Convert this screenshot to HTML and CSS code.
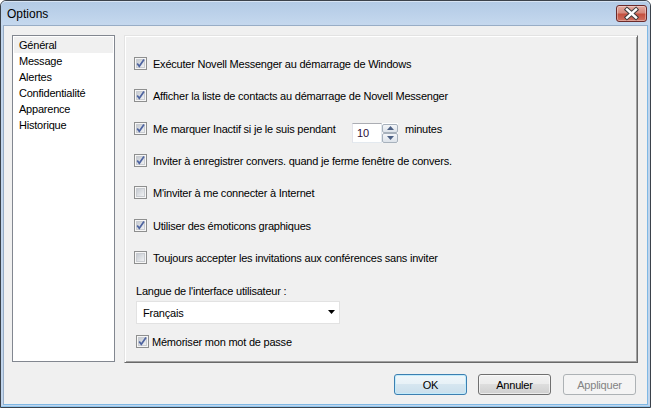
FILE: index.html
```html
<!DOCTYPE html>
<html lang="fr">
<head>
<meta charset="utf-8">
<title>Options</title>
<link rel="stylesheet" href="styles.css">
</head>
<body>
<svg class="defs" width="0" height="0" aria-hidden="true">
  <defs>
    <linearGradient id="cbg" x1="0" y1="0" x2="1" y2="1">
      <stop offset="0" stop-color="#c3c8cf"/>
      <stop offset="1" stop-color="#f3f4f5"/>
    </linearGradient>
    <symbol id="boxu" viewBox="0 0 13 13">
      <rect x="0.5" y="0.5" width="12" height="12" fill="#f6f6f6" stroke="#8e8f8f"/>
      <rect x="2.5" y="2.5" width="8" height="8" fill="url(#cbg)" stroke="#c9ccd1"/>
    </symbol>
    <symbol id="boxc" viewBox="0 0 13 13">
      <rect x="0.5" y="0.5" width="12" height="12" fill="#f6f6f6" stroke="#8e8f8f"/>
      <rect x="2.5" y="2.5" width="8" height="8" fill="url(#cbg)" stroke="#c9ccd1"/>
      <path d="M3.2 6.4 L5.3 9.2 L10 2.6" fill="none" stroke="#4e64a0" stroke-width="1.7" stroke-linejoin="miter"/>
    </symbol>
  </defs>
</svg>
<div class="window">
  <div class="titlebar">
    <span class="title">Options</span>
    <div class="close">
      <svg width="31" height="17" viewBox="0 0 31 17">
        <path d="M11 4.5 L20 12.5 M20 4.5 L11 12.5" stroke="#3d3d3d" stroke-width="4.4" stroke-linecap="square"/>
        <path d="M11 4.5 L20 12.5 M20 4.5 L11 12.5" stroke="#ffffff" stroke-width="2.4" stroke-linecap="square"/>
      </svg>
    </div>
  </div>
  <div class="frame">
    <div class="client">
      <div class="main">
        <ul class="nav">
          <li class="selected">Général</li>
          <li>Message</li>
          <li>Alertes</li>
          <li>Confidentialité</li>
          <li>Apparence</li>
          <li>Historique</li>
        </ul>
        <div class="panel">
          <div class="row"><svg class="cb"><use href="#boxc"/></svg><span class="lbl">Exécuter Novell Messenger au démarrage de Windows</span></div>
          <div class="row"><svg class="cb"><use href="#boxc"/></svg><span class="lbl">Afficher la liste de contacts au démarrage de Novell Messenger</span></div>
          <div class="row"><svg class="cb"><use href="#boxc"/></svg><span class="lbl lbl-fixed">Me marquer Inactif si je le suis pendant</span>
            <div class="spin-input">10</div>
            <div class="spin-btns">
              <div class="spin-btn"><svg width="7" height="4" viewBox="0 0 7 4"><path d="M0 4 L3.5 0 L7 4 Z" fill="#4d6185"/></svg></div>
              <div class="spin-btn"><svg width="7" height="4" viewBox="0 0 7 4"><path d="M0 0 L3.5 4 L7 0 Z" fill="#4d6185"/></svg></div>
            </div>
            <span class="lbl minutes">minutes</span>
          </div>
          <div class="row"><svg class="cb"><use href="#boxc"/></svg><span class="lbl">Inviter à enregistrer convers. quand je ferme fenêtre de convers.</span></div>
          <div class="row"><svg class="cb"><use href="#boxu"/></svg><span class="lbl">M'inviter à me connecter à Internet</span></div>
          <div class="row"><svg class="cb"><use href="#boxc"/></svg><span class="lbl">Utiliser des émoticons graphiques</span></div>
          <div class="row"><svg class="cb"><use href="#boxu"/></svg><span class="lbl">Toujours accepter les invitations aux conférences sans inviter</span></div>
          <div class="group">
            <div class="field-label">Langue de l'interface utilisateur :</div>
            <div class="select">
              <span>Français</span>
              <svg width="7" height="4" viewBox="0 0 7 4"><path d="M0 0 L7 0 L3.5 4 Z" fill="#000"/></svg>
            </div>
            <div class="row row-last"><svg class="cb"><use href="#boxc"/></svg><span class="lbl lbl-tight">Mémoriser mon mot de passe</span></div>
          </div>
        </div>
      </div>
      <div class="footer">
        <button class="btn btn-default">OK</button>
        <button class="btn">Annuler</button>
        <button class="btn btn-disabled" disabled>Appliquer</button>
      </div>
    </div>
  </div>
</div>
</body>
</html>
```
FILE: styles.css
```css
* { box-sizing: border-box; }
html, body { margin: 0; padding: 0; }
body {
  width: 651px;
  height: 408px;
  overflow: hidden;
  background: #ffffff;
  font-family: "Liberation Sans", Arial, sans-serif;
  font-size: 11px;
  color: #000;
}
.defs { position: absolute; width: 0; height: 0; }
.window {
  width: 651px;
  height: 408px;
  border: 1px solid #3b424b;
  border-radius: 6px 6px 0 0;
  background: #c1d5ec;
  display: flex;
  flex-direction: column;
  overflow: hidden;
}
.titlebar {
  height: 24px;
  flex: 0 0 24px;
  display: flex;
  justify-content: space-between;
  align-items: flex-start;
  background: linear-gradient(#b2cae5, #c5d8ee);
  box-shadow: inset 0 1px #d7e4f3;
  border-radius: 5px 5px 0 0;
}
.title {
  font-size: 12px;
  line-height: 24px;
  padding: 1px 0 0 6px;
  color: #000;
}
.close {
  width: 31px;
  height: 17px;
  margin: 4px 3px 0 0;
  border: 1px solid #6b2a2a;
  border-radius: 3px;
  background: linear-gradient(#e4aaa0 0%, #d68a7d 45%, #c4503f 55%, #cf7161 100%);
  box-shadow: inset 0 0 0 1px rgba(255,255,255,0.35);
  display: flex;
  align-items: center;
  justify-content: center;
}
.close svg { display: block; margin: -1px; }
.frame {
  flex: 1;
  padding: 0 2px 2px 2px;
  background: #c1d5ec;
  box-shadow: inset 0 -1px #8fc6ee;
}
.client {
  width: 645px;
  height: 380px;
  border: 1px solid #98adc6;
  border-bottom-color: #7fb8e4;
  border-right-color: #7fb8e4;
  background: #f0f0f0;
  padding: 9px 9px 0 8px;
  letter-spacing: -0.22px;
}
.main {
  display: flex;
  height: 328px;
}
.nav {
  list-style: none;
  margin: 0 9px 0 0;
  padding: 1px;
  width: 103px;
  height: 327px;
  background: #fff;
  border: 1px solid #828790;
}
.nav li {
  height: 16px;
  line-height: 16px;
  padding-left: 5px;
  white-space: nowrap;
}
.nav li.selected { background: #f0f0f0; }
.panel {
  width: 514px;
  height: 328px;
  border-top: 1px solid #e3e3e3;
  border-left: 1px solid #e3e3e3;
  border-right: 1px solid #696969;
  border-bottom: 1px solid #696969;
  box-shadow: inset 1px 1px #ffffff, inset -1px -1px #a0a0a0;
  padding: 21px 0 0 9px;
  display: flex;
  flex-direction: column;
  gap: 19.33px;
}
.row {
  height: 13px;
  display: flex;
  align-items: flex-start;
  white-space: nowrap;
}
.cb {
  width: 13px;
  height: 13px;
  flex: 0 0 13px;
  display: block;
}
.lbl {
  line-height: 13px;
  margin-left: 6px;
  padding-top: 1px;
}
.lbl-fixed { width: 199px; flex: 0 0 199px; }
.spin-input {
  width: 30px;
  height: 20px;
  margin: 1px 0 0 0;
  background: #fff;
  border: 1px solid #e3e9ef;
  border-top-color: #abadb3;
  border-left-color: #e2e3ea;
  padding: 3px 0 0 4px;
  line-height: 13px;
  color: #2c0d3a;
}
.spin-btns {
  width: 16px;
  height: 20px;
  margin-top: 1px;
  display: flex;
  flex-direction: column;
  background: #fff;
  padding: 1px 0 0 0;
}
.spin-btn {
  flex: 1;
  border: 1px solid #a7b1bc;
  border-radius: 2px;
  background: linear-gradient(#f4f6f9, #dde3ea);
  display: flex;
  align-items: center;
  justify-content: center;
}
.spin-btn svg { display: block; }
.minutes { margin-left: 7px; }
.group {
  margin-top: 0.7px;
  padding-left: 2px;
  display: flex;
  flex-direction: column;
}
.field-label {
  line-height: 13px;
  padding-top: 1px;
  height: 13px;
}
.select {
  margin-top: 4px;
  width: 204px;
  height: 23px;
  background: #fff;
  border: 1px solid #e2e2e2;
  display: flex;
  align-items: center;
  justify-content: space-between;
  padding: 1px 4px 0 6px;
}
.select svg { display: block; margin-top: -1px; }
.row-last { margin-top: 11px; }
.lbl-tight { margin-left: 3px; }
.footer {
  display: flex;
  justify-content: flex-end;
  margin-top: 11px;
  padding-right: 2px;
  letter-spacing: 0;
}
.btn {
  width: 73px;
  height: 21px;
  margin: 0 0 0 11px;
  padding: 0;
  font-family: "Liberation Sans", Arial, sans-serif;
  font-size: 11px;
  letter-spacing: -0.2px;
  color: #000;
  border: 1px solid #707070;
  border-radius: 3px;
  background: linear-gradient(#f2f2f2 0%, #ebebeb 50%, #dddddd 50%, #cfcfcf 100%);
  box-shadow: inset 0 0 0 1px rgba(255,255,255,0.6);
}
.btn-default {
  border-color: #3c7fb1;
  box-shadow: inset 0 0 0 1px #c2ebfb;
  background: linear-gradient(#f0f6fa 0%, #e7f1f7 50%, #d6e6f0 50%, #cadfec 100%);
}
.btn-disabled {
  margin-left: 12px;
  color: #838383;
  border-color: #adb2b5;
  background: #f4f4f4;
  box-shadow: none;
}
```
